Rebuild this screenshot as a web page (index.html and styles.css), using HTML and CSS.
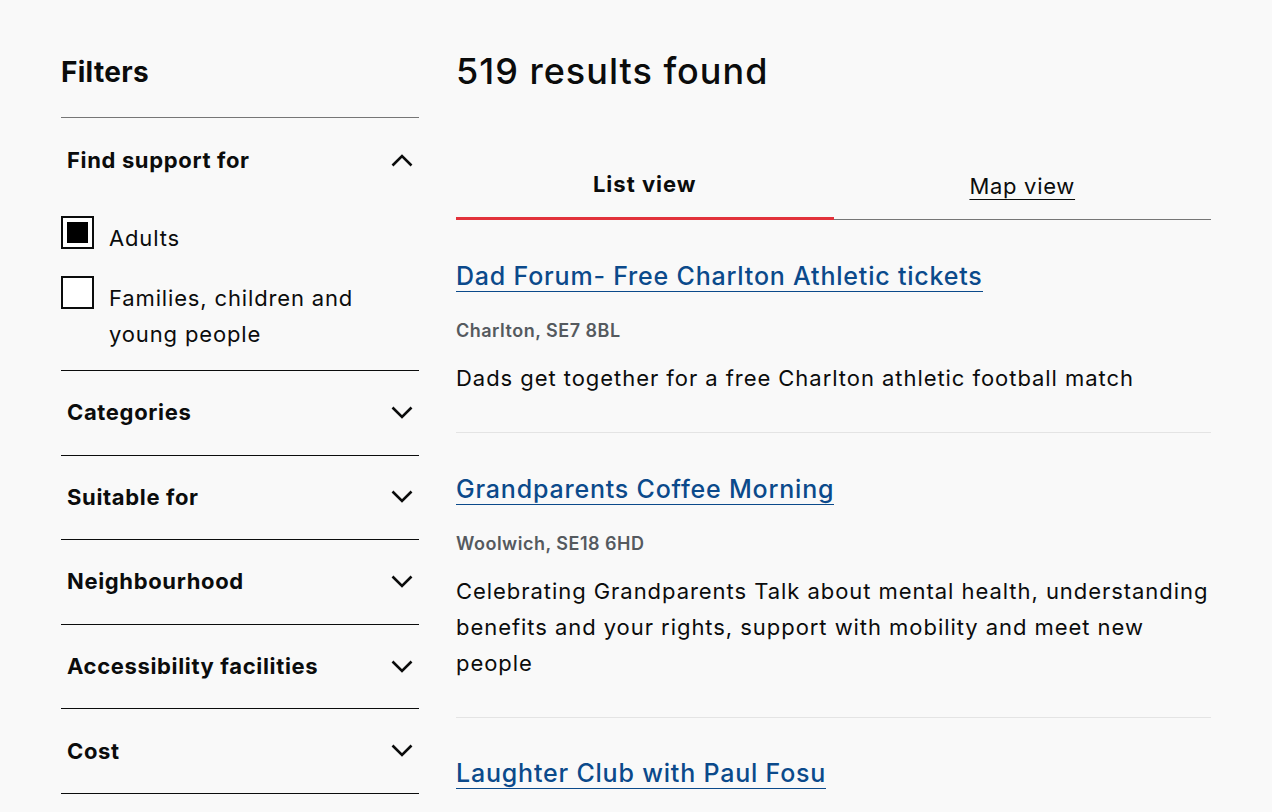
FILE: index.html
```html
<!DOCTYPE html>
<html lang="en">
<head>
<meta charset="utf-8">
<title>Results</title>
<link rel="stylesheet" href="styles.css">
</head>
<body>
<div class="page">
  <aside class="sidebar">
    <h2 class="filters-title">Filters</h2>

    <section class="filter open">
      <button class="filter-head" type="button">
        <span>Find support for</span>
        <svg class="chev" width="22" height="13" viewBox="0 0 22 13"><path d="M1.5 11.5 L11 2 L20.5 11.5" fill="none" stroke="#0b0c0c" stroke-width="2.6"/></svg>
      </button>
      <div class="options">
        <label class="option">
          <span class="box checked"><span class="fill"></span></span>
          <span class="option-text">Adults</span>
        </label>
        <label class="option">
          <span class="box"></span>
          <span class="option-text">Families, children and young people</span>
        </label>
      </div>
    </section>

    <section class="filter">
      <button class="filter-head" type="button">
        <span>Categories</span>
        <svg class="chev" width="22" height="13" viewBox="0 0 22 13"><path d="M1.5 1.5 L11 11 L20.5 1.5" fill="none" stroke="#0b0c0c" stroke-width="2.6"/></svg>
      </button>
    </section>
    <section class="filter">
      <button class="filter-head" type="button">
        <span>Suitable for</span>
        <svg class="chev" width="22" height="13" viewBox="0 0 22 13"><path d="M1.5 1.5 L11 11 L20.5 1.5" fill="none" stroke="#0b0c0c" stroke-width="2.6"/></svg>
      </button>
    </section>
    <section class="filter">
      <button class="filter-head" type="button">
        <span>Neighbourhood</span>
        <svg class="chev" width="22" height="13" viewBox="0 0 22 13"><path d="M1.5 1.5 L11 11 L20.5 1.5" fill="none" stroke="#0b0c0c" stroke-width="2.6"/></svg>
      </button>
    </section>
    <section class="filter">
      <button class="filter-head" type="button">
        <span>Accessibility facilities</span>
        <svg class="chev" width="22" height="13" viewBox="0 0 22 13"><path d="M1.5 1.5 L11 11 L20.5 1.5" fill="none" stroke="#0b0c0c" stroke-width="2.6"/></svg>
      </button>
    </section>
    <section class="filter">
      <button class="filter-head" type="button">
        <span>Cost</span>
        <svg class="chev" width="22" height="13" viewBox="0 0 22 13"><path d="M1.5 1.5 L11 11 L20.5 1.5" fill="none" stroke="#0b0c0c" stroke-width="2.6"/></svg>
      </button>
    </section>
  </aside>

  <main class="main">
    <h1 class="results-title">519 results found</h1>

    <nav class="tabs">
      <a class="tab active" href="#">List view</a>
      <a class="tab" href="#"><span class="tab-link">Map view</span></a>
    </nav>

    <ul class="results">
      <li class="result">
        <a class="result-title" href="#">Dad Forum- Free Charlton Athletic tickets</a>
        <p class="result-loc">Charlton, SE7 8BL</p>
        <p class="result-desc">Dads get together for a free Charlton athletic football match</p>
      </li>
      <li class="result">
        <a class="result-title" href="#">Grandparents Coffee Morning</a>
        <p class="result-loc">Woolwich, SE18 6HD</p>
        <p class="result-desc">Celebrating Grandparents Talk about mental health, understanding benefits and your rights, support with mobility and meet new people</p>
      </li>
      <li class="result">
        <a class="result-title" href="#">Laughter Club with Paul Fosu</a>
      </li>
    </ul>
  </main>
</div>
</body>
</html>
```

FILE: styles.css
```css
* { box-sizing: border-box; }

html, body {
  margin: 0;
  padding: 0;
  background: #f9f9f9;
  color: #0b0c0c;
  font-family: Inter, "Noto Sans", "Liberation Sans", sans-serif;
  overflow: hidden;
  height: 812px;
}

.page {
  display: flex;
  align-items: flex-start;
  gap: 37px;
  padding: 0 59px 0 61px;
}

/* Sidebar */
.sidebar {
  width: 358px;
  flex: none;
  padding-top: 53px;
}

.filters-title {
  margin: 0;
  font-size: 28px;
  line-height: 38px;
  font-weight: 700;
  letter-spacing: 0.3px;
  padding-bottom: 26px;
  border-bottom: 1px solid #767676;
}

.filter {
  border-bottom: 1px solid #0b0c0c;
}

.filter-head {
  display: flex;
  width: 100%;
  align-items: center;
  justify-content: space-between;
  height: 83.6px;
  padding: 0 7px 1px 6px;
  border: 0;
  background: none;
  font: inherit;
  font-size: 22px;
  font-weight: 700;
  letter-spacing: 0.65px;
  color: #0b0c0c;
  text-align: left;
  cursor: pointer;
}

.filter.open .filter-head { height: 85px; }

.chev { display: block; margin-right: -1px; }

.options {
  padding: 13px 0 18px;
  display: flex;
  flex-direction: column;
  gap: 20px;
}

.option {
  display: flex;
  align-items: flex-start;
  gap: 15px;
  cursor: pointer;
}

.box {
  flex: none;
  width: 33px;
  height: 33px;
  border: 2px solid #0b0c0c;
  background: #fff;
  display: flex;
  align-items: center;
  justify-content: center;
}

.box .fill {
  width: 21px;
  height: 21px;
  background: #000;
}

.option-text {
  padding-top: 4px;
  font-size: 22px;
  line-height: 36px;
  letter-spacing: 0.85px;
  width: 280px;
}

/* Main */
.main {
  width: 755px;
  flex: none;
  padding-top: 44px;
}

.results-title {
  margin: 0;
  font-size: 36px;
  line-height: 54px;
  font-weight: 500;
  letter-spacing: 1px;
}

.tabs {
  display: flex;
  margin-top: 60px;
  border-bottom: 1px solid #767676;
}

.tab {
  flex: 1 1 0;
  display: flex;
  justify-content: center;
  align-items: center;
  height: 61px;
  padding-bottom: 10px;
  font-size: 22px;
  letter-spacing: 0.7px;
  color: #0b0c0c;
  text-decoration: none;
}

.tab.active {
  font-weight: 700;
  letter-spacing: 1px;
  border-bottom: 3px solid #e2323b;
  margin-bottom: -1px;
  height: 62px;
  padding-bottom: 7px;
}

.tab-link {
  text-decoration: underline;
  text-decoration-thickness: 1px;
  text-underline-offset: 5px;
  padding-top: 4px;
}

.results {
  list-style: none;
  margin: 0;
  padding: 0;
}

.result {
  padding: 41px 0 36px;
  border-bottom: 1px solid #e4e4e4;
}

.result:last-child {
  padding-top: 40px;
  border-bottom: 0;
}

.result-title {
  display: inline-block;
  font-size: 25px;
  line-height: 30px;
  font-weight: 500;
  letter-spacing: 0.8px;
  color: #0b4a8b;
  text-decoration: none;
  border-bottom: 1px solid #0b4a8b;
}

.result-loc {
  margin: 27px 0 0;
  font-size: 18px;
  line-height: 24px;
  font-weight: 600;
  letter-spacing: 0.5px;
  color: #555a5f;
}

.result-desc {
  margin: 17px 0 0;
  font-size: 22px;
  line-height: 36px;
  letter-spacing: 0.95px;
}
```
